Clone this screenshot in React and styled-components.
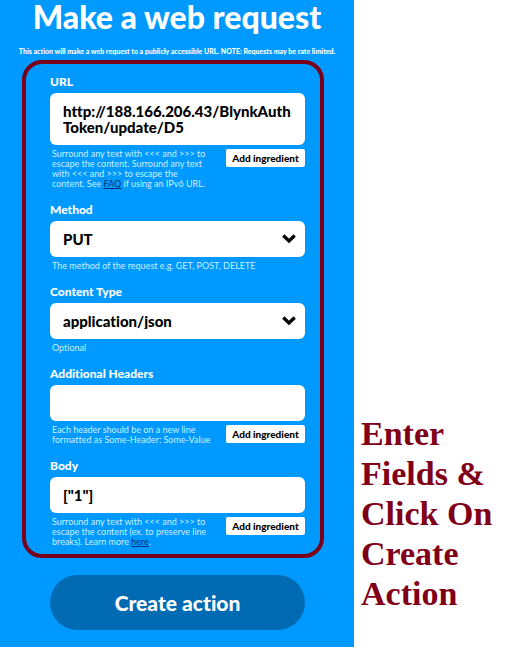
import React, { useId } from "react";
import styled, { createGlobalStyle } from "styled-components";

const GlobalStyle = createGlobalStyle`
  *, *::before, *::after { box-sizing: border-box; }
  body {
    margin: 0;
    background: #fff;
    font-family: Lato, "Open Sans", sans-serif;
    font-variant-ligatures: none;
  }
`;

const Page = styled.div`
  display: flex;
  align-items: flex-start;
`;

const Panel = styled.main`
  flex: 1;
  min-width: 0;
  display: flex;
  flex-direction: column;
  padding-bottom: 17px;
  background: #0099ff;
  color: #fff;
`;

const Title = styled.h1`
  margin: 0;
  font-size: 32px;
  line-height: 34px;
  font-weight: 900;
  text-align: center;
  white-space: nowrap;
`;

const Notice = styled.p`
  margin: 12px 0 4px;
  font-size: 7px;
  line-height: 10px;
  font-weight: 900;
  text-align: center;
  white-space: nowrap;
`;

const Form = styled.form`
  display: flex;
  flex-direction: column;
  gap: 17px;
`;

const Frame = styled.div`
  display: flex;
  flex-direction: column;
  gap: 13px;
  margin: 0 30px 0 22px;
  padding: 10px 15px 7px 24px;
  border: 4px solid #7a0019;
  border-radius: 20px;
`;

const FieldBlock = styled.div`
  display: flex;
  flex-direction: column;
`;

const Label = styled.label`
  margin-bottom: 3px;
  font-size: 12px;
  line-height: 16px;
  font-weight: 900;
`;

const controlStyle = `
  display: block;
  width: 100%;
  margin: 0;
  border: 0;
  border-radius: 6px;
  background: #fff;
  color: #000;
  font-family: inherit;
  font-variant-ligatures: none;
  font-size: 15px;
  line-height: 16px;
  font-weight: 900;
`;

const TextArea = styled.textarea`
  ${controlStyle}
  padding: 10px 13px;
  resize: none;
  overflow: hidden;
`;

const Select = styled.select`
  ${controlStyle}
  height: 36px;
  padding: 0 36px 0 13px;
  appearance: none;
`;

const SelectBox = styled.div`
  position: relative;
`;

const Chevron = styled.svg`
  position: absolute;
  top: 12px;
  right: 9px;
  width: 14px;
  height: 11px;
  pointer-events: none;
`;

const HelpRow = styled.div`
  display: flex;
  justify-content: space-between;
  align-items: flex-start;
  margin-top: 4px;
  padding-left: 2px;
`;

const Help = styled.p`
  margin: 0;
  color: #c9f0ff;
  font-size: 9px;
  line-height: 10px;
  white-space: pre-line;
`;

const HelpLink = styled.a`
  color: #06307a;
  text-decoration: underline;
`;

const IngredientButton = styled.button`
  flex: none;
  width: 79px;
  height: 18px;
  padding: 0;
  border: 0;
  border-radius: 2px;
  background: #fff;
  color: #000;
  font-family: inherit;
  font-size: 10px;
  line-height: 18px;
  font-weight: 900;
`;

const SubmitButton = styled.button`
  height: 55px;
  margin: 0 49px 0 50px;
  padding: 0;
  border: 0;
  border-radius: 28px;
  background: #006bb3;
  color: #fff;
  font-family: inherit;
  font-variant-ligatures: none;
  font-size: 21px;
  font-weight: 900;
`;

const Caption = styled.aside`
  flex: none;
  width: 154px;
  padding: 414px 0 0 7px;
  color: #800018;
  font-family: "Liberation Serif", serif;
  font-size: 34px;
  line-height: 40px;
  font-weight: 700;
  white-space: pre-line;
`;

function TextField({ label, value, rows = 1, help }) {
  const id = useId();
  return (
    <FieldBlock>
      <Label htmlFor={id}>{label}</Label>
      <TextArea id={id} rows={rows} defaultValue={value} spellCheck={false} />
      <HelpRow>
        <Help>{help}</Help>
        <IngredientButton type="button">Add ingredient</IngredientButton>
      </HelpRow>
    </FieldBlock>
  );
}

function SelectField({ label, options, help }) {
  const id = useId();
  return (
    <FieldBlock>
      <Label htmlFor={id}>{label}</Label>
      <SelectBox>
        <Select id={id}>
          {options.map((option) => (
            <option key={option}>{option}</option>
          ))}
        </Select>
        <Chevron viewBox="0 0 14 11" aria-hidden="true">
          <path d="M1.300 2.500 7 8l5.700-5.500" fill="none" stroke="#000" strokeWidth="3.300" />
        </Chevron>
      </SelectBox>
      <HelpRow>
        <Help>{help}</Help>
      </HelpRow>
    </FieldBlock>
  );
}

export default function App() {
  return (
    <>
      <GlobalStyle />
      <Page>
        <Panel>
          <Title>Make a web request</Title>
          <Notice>
            This action will make a web request to a publicly accessible URL. NOTE: Requests may be rate limited.
          </Notice>
          <Form>
            <Frame>
              <TextField
                label="URL"
                rows={2}
                value={"http://188.166.206.43/BlynkAuth\nToken/update/D5"}
                help={
                  <>
                    {"Surround any text with <<< and >>> to\nescape the content. Surround any text\nwith <<< and >>> to escape the\ncontent. See "}
                    <HelpLink href="#faq">FAQ</HelpLink> if using an IPv6 URL.
                  </>
                }
              />
              <SelectField
                label="Method"
                options={["PUT"]}
                help="The method of the request e.g. GET, POST, DELETE"
              />
              <SelectField label="Content Type" options={["application/json"]} help="Optional" />
              <TextField
                label="Additional Headers"
                value=""
                help={"Each header should be on a new line\nformatted as Some-Header: Some-Value"}
              />
              <TextField
                label="Body"
                value={'["1"]'}
                help={
                  <>
                    {"Surround any text with <<< and >>> to\nescape the content (ex. to preserve line\nbreaks). Learn more "}
                    <HelpLink href="#escaping">here</HelpLink>.
                  </>
                }
              />
            </Frame>
            <SubmitButton type="button">Create action</SubmitButton>
          </Form>
        </Panel>
        <Caption>{"Enter\nFields &\nClick On\nCreate\nAction"}</Caption>
      </Page>
    </>
  );
}
